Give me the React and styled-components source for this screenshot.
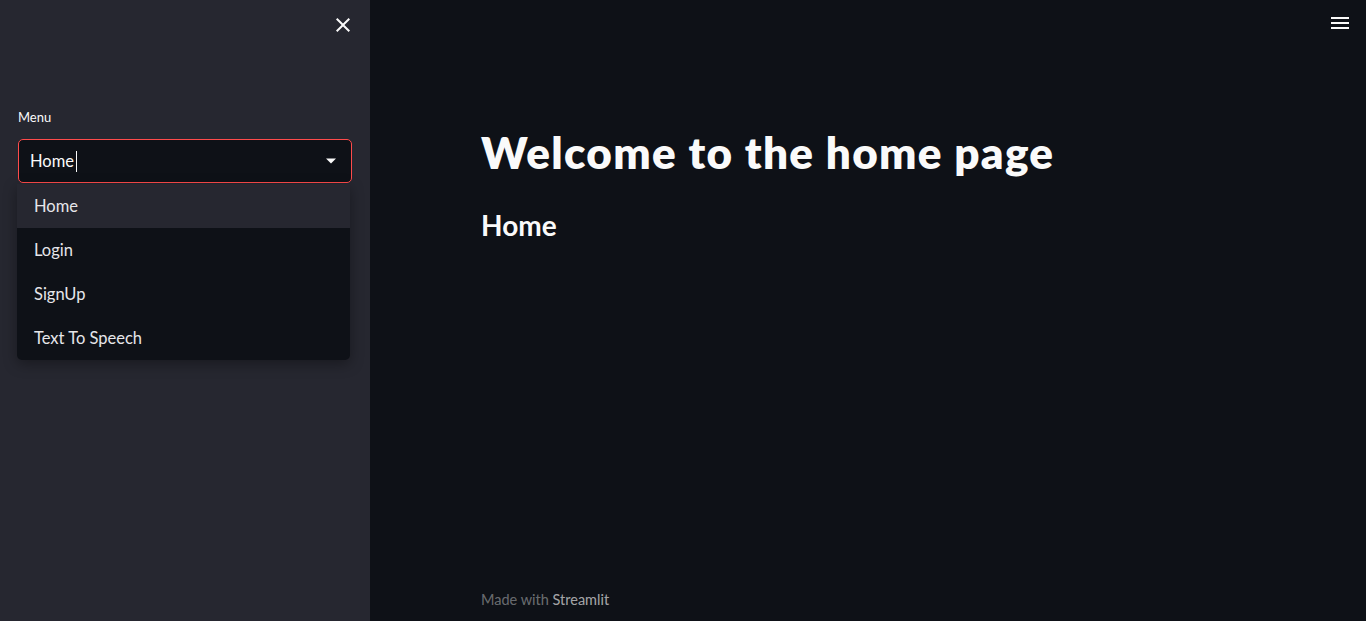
import React from "react";
import styled, { createGlobalStyle } from "styled-components";

const GlobalStyle = createGlobalStyle`
  html, body {
    margin: 0;
    padding: 0;
    height: 100%;
    background: #0e1117;
    overflow: hidden;
  }
  body {
    font-family: Lato, "Noto Sans", sans-serif;
    color: #fafafa;
  }
`;

const Page = styled.div`
  display: flex;
  width: 100vw;
  height: 100vh;
`;

const Sidebar = styled.aside`
  width: 370px;
  flex: none;
  background: #262730;
  display: flex;
  flex-direction: column;
`;

const SidebarHeader = styled.div`
  display: flex;
  justify-content: flex-end;
  padding: 13px 15px 0 0;
  height: 24px;
`;

const IconButton = styled.button`
  width: 24px;
  height: 24px;
  padding: 0;
  border: none;
  background: none;
  color: #fafafa;
  display: flex;
  align-items: center;
  justify-content: center;
  cursor: pointer;
`;

const SidebarBody = styled.div`
  padding: 72px 18px 0 18px;
`;

const Label = styled.label`
  display: block;
  font-size: 13px;
  line-height: 16px;
  margin-bottom: 14px;
  color: #fafafa;
`;

const SelectWrap = styled.div`
  position: relative;
`;

const SelectBox = styled.div`
  height: 42px;
  border: 1px solid #ff4b4b;
  border-radius: 5px;
  background: #0e1117;
  display: flex;
  align-items: center;
  padding: 0 14px 0 11px;
`;

const SelectValue = styled.span`
  flex: 1;
  font-size: 16.5px;
  display: flex;
  align-items: center;
`;

const Cursor = styled.span`
  width: 1px;
  height: 21px;
  background: #fafafa;
  margin-left: 2px;
`;

const Menu = styled.ul`
  position: absolute;
  top: 45px;
  left: -1px;
  width: 333px;
  margin: 0;
  padding: 0;
  list-style: none;
  background: #0e1117;
  border-radius: 0 0 5px 5px;
  box-shadow: 0 4px 14px rgba(0, 0, 0, 0.35);
  overflow: hidden;
`;

const Option = styled.li`
  height: 44px;
  display: flex;
  align-items: center;
  padding-left: 17px;
  font-size: 16.5px;
  color: #e6e6ea;
  background: ${(p) => (p.$active ? "#262730" : "transparent")};
`;

const Main = styled.main`
  flex: 1;
  display: flex;
  flex-direction: column;
  position: relative;
  padding-left: 111px;
`;

const TopRight = styled.div`
  position: absolute;
  top: 11px;
  right: 14px;
`;

const Content = styled.div`
  padding-top: 126px;
`;

const Title = styled.h1`
  margin: 0;
  font-size: 44px;
  line-height: 1.2;
  font-weight: 800;
  color: #fafafa;
  letter-spacing: 1.3px;
`;

const Subtitle = styled.h3`
  margin: 30px 0 0 0;
  font-size: 28px;
  line-height: 1.2;
  font-weight: 700;
  color: #fafafa;
`;

const Footer = styled.footer`
  margin-top: auto;
  padding-bottom: 13px;
  font-size: 14.5px;
  color: rgba(250, 250, 250, 0.4);
`;

const FooterLink = styled.span`
  color: rgba(250, 250, 250, 0.65);
`;

function CloseIcon() {
  return (
    <svg width="24" height="24" viewBox="0 0 24 24" fill="currentColor">
      <path d="M19 6.41L17.59 5 12 10.59 6.41 5 5 6.41 10.59 12 5 17.59 6.41 19 12 13.41 17.59 19 19 17.59 13.41 12z" />
    </svg>
  );
}

function MenuIcon() {
  return (
    <svg width="24" height="24" viewBox="0 0 24 24" fill="currentColor">
      <path d="M3 18h18v-2H3v2zm0-5h18v-2H3v2zm0-7v2h18V6H3z" />
    </svg>
  );
}

function Caret() {
  return (
    <svg width="12" height="8" viewBox="0 0 12 8" fill="#fafafa">
      <path d="M1 1.5h10L6 6.5z" />
    </svg>
  );
}

const pages = ["Home", "Login", "SignUp", "Text To Speech"];

export default function App() {
  return (
    <Page>
      <GlobalStyle />
      <Sidebar>
        <SidebarHeader>
          <IconButton aria-label="close">
            <CloseIcon />
          </IconButton>
        </SidebarHeader>
        <SidebarBody>
          <Label>Menu</Label>
          <SelectWrap>
            <SelectBox>
              <SelectValue>
                Home
                <Cursor />
              </SelectValue>
              <Caret />
            </SelectBox>
            <Menu>
              {pages.map((p, i) => (
                <Option key={p} $active={i === 0}>
                  {p}
                </Option>
              ))}
            </Menu>
          </SelectWrap>
        </SidebarBody>
      </Sidebar>
      <Main>
        <TopRight>
          <IconButton aria-label="menu">
            <MenuIcon />
          </IconButton>
        </TopRight>
        <Content>
          <Title>Welcome to the home page</Title>
          <Subtitle>Home</Subtitle>
        </Content>
        <Footer>
          Made with <FooterLink>Streamlit</FooterLink>
        </Footer>
      </Main>
    </Page>
  );
}
